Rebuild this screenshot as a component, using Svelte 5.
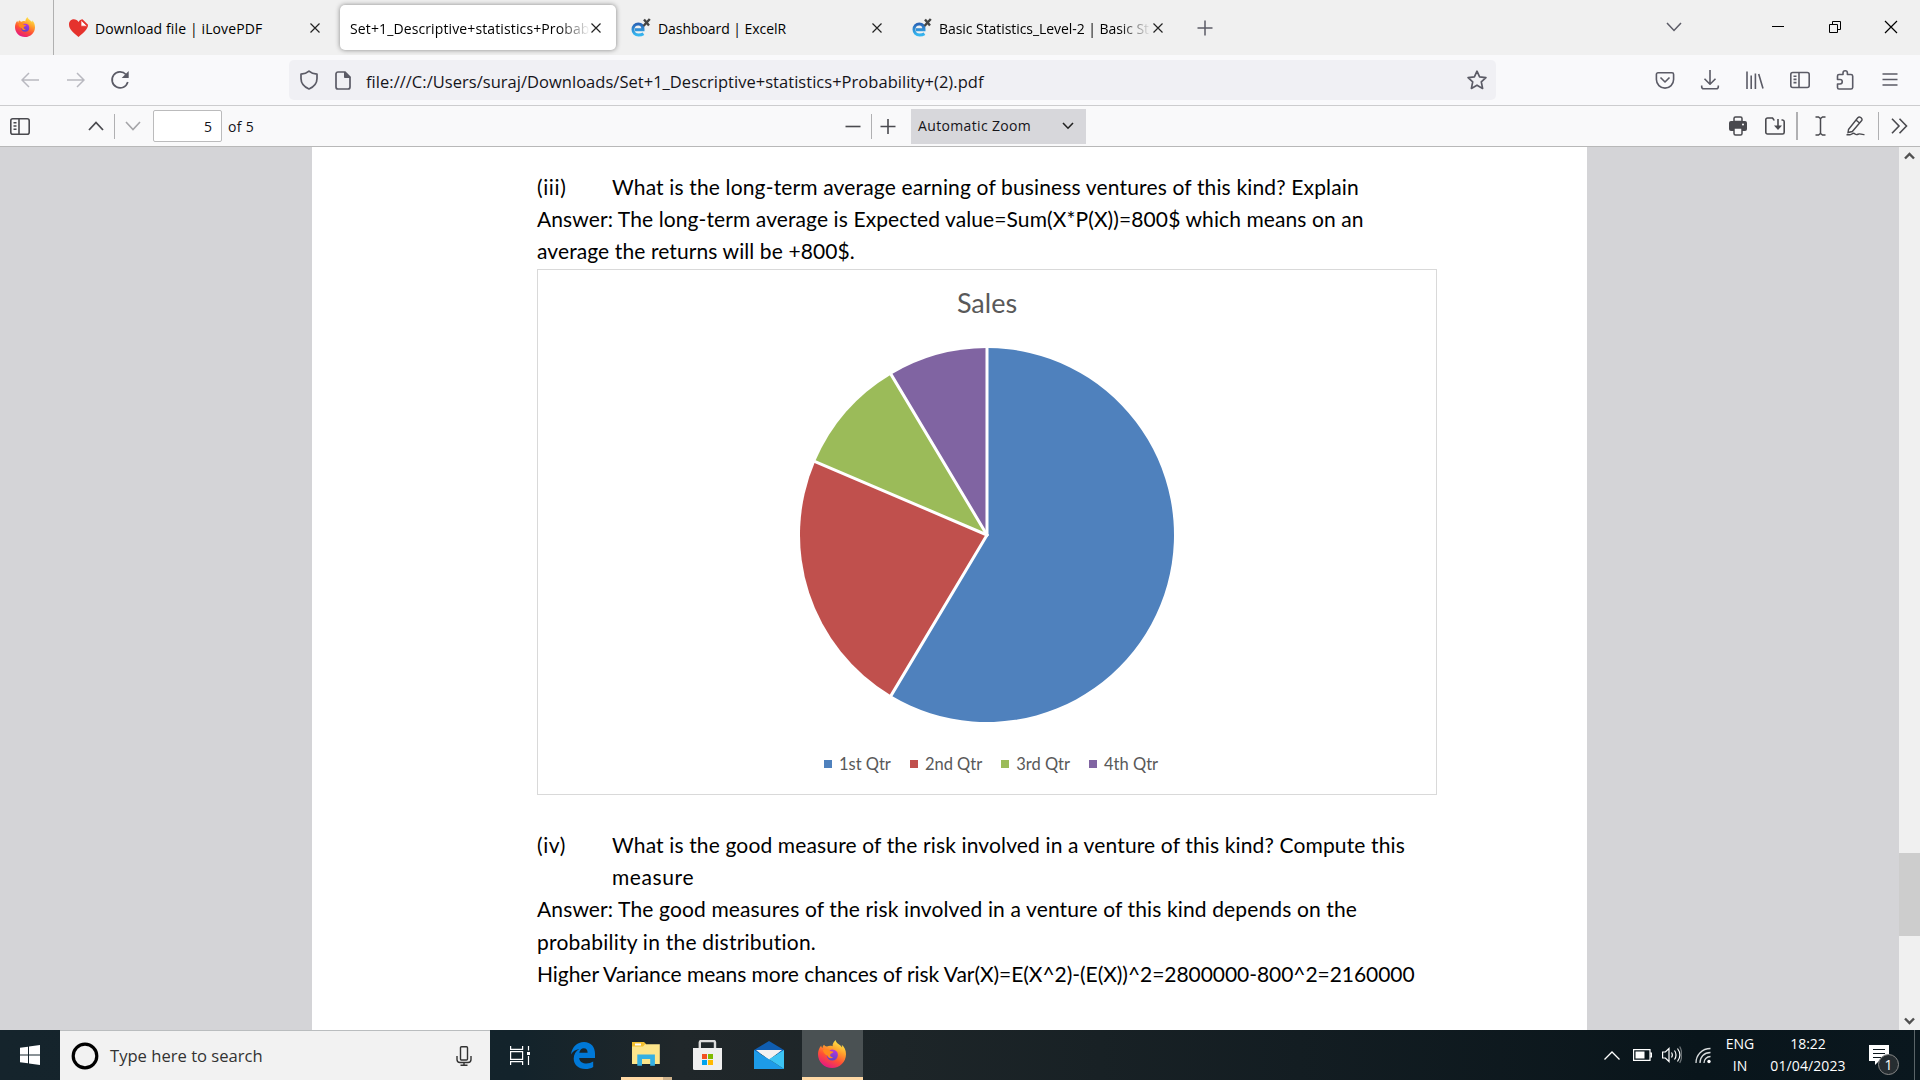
<script>
  const R = 187;
  const quarters = [
    { name: '1st Qtr', value: 8.2, color: '#4f81bd' },
    { name: '2nd Qtr', value: 3.2, color: '#c0504d' },
    { name: '3rd Qtr', value: 1.4, color: '#9bbb59' },
    { name: '4th Qtr', value: 1.2, color: '#8064a2' }
  ];
  const total = quarters.reduce((s, q) => s + q.value, 0);
  let acc = 0;
  const slices = quarters.map((q) => {
    const a0 = (acc / total) * 2 * Math.PI;
    acc += q.value;
    const a1 = (acc / total) * 2 * Math.PI;
    const large = a1 - a0 > Math.PI ? 1 : 0;
    const p = (a) => `${(R * Math.sin(a)).toFixed(2)} ${(-R * Math.cos(a)).toFixed(2)}`;
    return { color: q.color, d: `M0 0L${p(a0)}A${R} ${R} 0 ${large} 1 ${p(a1)}Z`, ray: p(a0).split(' ') };
  });
</script>

{#snippet firefox(size)}
  <svg width={size} height={size} viewBox="0 0 28 28">
    <defs>
      <linearGradient id="ffx" x1="0.8" y1="0" x2="0.3" y2="1">
        <stop offset="0" stop-color="#fff44f" /><stop offset=".35" stop-color="#ffa22c" />
        <stop offset=".65" stop-color="#ff5034" /><stop offset="1" stop-color="#e31587" />
      </linearGradient>
      <linearGradient id="ffp" x1="0.6" y1="0" x2="0.4" y2="1">
        <stop offset="0" stop-color="#b833e1" /><stop offset="1" stop-color="#5a45c9" />
      </linearGradient>
    </defs>
    <path fill="url(#ffx)" d="M17.600 0c-2 2-3.200 4-3 6.200-2-.8-4-.5-5.600.4C7.400 6.300 6.500 5.500 6 4.700 5 5.500 4.500 6.500 4.600 7.900 3.700 7.300 3.300 6.400 3.200 5.400 1 8.200 0 11 0 14.300 0 22 6.300 28 14 28s14-6 14-13.800c0-4-1.600-7.500-4.300-9.500.4 1 .5 2 .4 2.800C22.500 4.500 18 3.600 17.600 0Z" />
    <circle cx="14.300" cy="15" r="5.600" fill="url(#ffp)" />
    <path fill="#ff8a1e" d="M5 10c3-2 6-1 7.500 1l3 .7c-.4 1.500-2.800 1.600-3.300 2.800-.4 1.500 1 3 3 2.700-1.700 2-5.200 1.200-5.700-1.400C7 14.500 5 12.500 5 10Z" />
  </svg>
{/snippet}

{#snippet closeX()}
  <svg class="x" width="12" height="12" viewBox="0 0 12 12"><path d="M1.500 1.500l9 9M10.500 1.500l-9 9" /></svg>
{/snippet}

{#snippet excelr()}
  <svg width="20" height="20" viewBox="0 0 20 20">
    <defs><linearGradient id="ex" x1="0" y1="0" x2="0" y2="1"><stop offset="0" stop-color="#2a66b8" /><stop offset="1" stop-color="#35b6f0" /></linearGradient></defs>
    <path d="M4 11.800h8C12 8 10 6 7.300 6 4.200 6 2 8.300 2 11.500S4.200 17 7.600 17c2 0 3.500-.4 4.900-1.300" fill="none" stroke="url(#ex)" stroke-width="3" />
    <path d="M13 1.500l5 6M18.800 1l-6.300 7" stroke="#444" stroke-width="2.400" />
  </svg>
{/snippet}

<div class="screen">
  <header class="tabs">
    <div class="pin">{@render firefox(20)}</div>
    <div class="tab t1">
      <svg width="19" height="18" viewBox="0 0 19 18"><path fill="#e5322d" d="M9.500 18C4 13.500 0 10 0 5.500 0 2.500 2 .3 4.800.3c2 0 3.700 1 4.700 2.700C10.500 1.300 12 .3 13.500.3L19 5.800c0 4.200-4 7.700-9.500 12.200Z" /><path fill="#fff" stroke="#e5322d" stroke-width=".7" d="M12 1.200v6h6.300Z" /></svg>
      <span class="name n1">Download file | iLovePDF</span>{@render closeX()}
    </div>
    <div class="tab t2 active">
      <span class="name n2">Set+1_Descriptive+statistics+Probab</span>{@render closeX()}
    </div>
    <div class="tab t3">{@render excelr()}<span class="name n3">Dashboard | ExcelR</span>{@render closeX()}</div>
    <div class="tab t4">{@render excelr()}<span class="name n4">Basic Statistics_Level-2 | Basic St</span>{@render closeX()}</div>
    <svg class="plus" width="16" height="16" viewBox="0 0 16 16"><path d="M8 .5v15M.5 8h15" /></svg>
    <div class="win">
      <svg width="16" height="10" viewBox="0 0 16 10" stroke="#5b5b66" stroke-width="1.500"><path d="M1 1l7 7.500L15 1" /></svg>
      <svg width="12" height="12" viewBox="0 0 12 12" stroke="#000"><path d="M0 5.500h12" /></svg>
      <svg width="12" height="12" viewBox="0 0 12 12" stroke="#000"><path d="M.5 3.500h8v8h-8zM3.500 3.500v-3h8v8h-3" /></svg>
      <svg width="14" height="14" viewBox="0 0 14 14" stroke="#000" stroke-width="1.200"><path d="M1 1l12 12M13 1L1 13" /></svg>
    </div>
  </header>

  <nav class="nav">
    <div class="navbtns">
      <svg width="18" height="16" viewBox="0 0 18 16" stroke="#b9b9c0" stroke-width="1.500"><path d="M18 8H1.500M8 1L1 8l7 7" /></svg>
      <svg width="18" height="16" viewBox="0 0 18 16" stroke="#b9b9c0" stroke-width="1.500"><path d="M0 8h16.500M10 1l7 7-7 7" /></svg>
      <svg width="20" height="20" viewBox="0 0 20 20" stroke="#5b5b66" stroke-width="1.700"><path d="M17.800 12A8 8 0 1 1 16 4.500" /><path fill="#5b5b66" stroke="none" d="M18.700 1v7h-7Z" /></svg>
    </div>
    <div class="url">
      <svg width="20" height="20" viewBox="0 0 20 20" stroke="#5b5b66" stroke-width="1.700"><path d="M10 1.200C12 3 15 4 18 4.200v4.300c0 4.500-3 8.300-8 10.500C5 16.800 2 13 2 8.500V4.200C5 4 8 3 10 1.200Z" stroke-linejoin="round" /></svg>
      <svg width="16" height="19" viewBox="0 0 16 19" stroke="#5b5b66" stroke-width="1.700"><path d="M3 1h7l5 5v10a2 2 0 0 1-2 2H3a2 2 0 0 1-2-2V3a2 2 0 0 1 2-2Z" /><path fill="#5b5b66" d="M9.500 1v5.500H15Z" stroke-width="1" /></svg>
      <span class="address">file:///C:/Users/suraj/Downloads/Set+1_Descriptive+statistics+Probability+(2).pdf</span>
      <svg class="star" width="20" height="20" viewBox="0 0 20 20" stroke="#5b5b66" stroke-width="1.700" stroke-linejoin="round"><path d="M10 1.200l2.600 5.600 6.300.8-4.600 4.200 1.300 6.600L10 15.200l-5.600 3.200 1.300-6.600L1.100 7.600l6.300-.8Z" /></svg>
    </div>
    <div class="tools">
      <svg viewBox="0 0 20 20"><path d="M3 2.800h14a1.600 1.600 0 0 1 1.600 1.600V9.500a8.600 8.600 0 0 1-17.200 0V4.400A1.600 1.600 0 0 1 3 2.800ZM5.500 7.500L10 12l4.500-4.500" /></svg>
      <svg viewBox="0 0 20 20"><path d="M10 0v14M4.500 8.700L10 14.200l5.500-5.500M1.700 15.500v1.300a2 2 0 0 0 2 2h12.600a2 2 0 0 0 2-2v-1.300" /></svg>
      <svg viewBox="0 0 20 20"><path d="M2 1.500V19M6.200 5.500V19M10.400 3.500V19M13.700 4l4.300 14.500" /></svg>
      <svg viewBox="0 0 20 20"><rect x=".8" y="2.500" width="18.400" height="15" rx="2" /><path d="M9 2.500v15M3.500 6.200H6.500M3.500 9.400H6.500M3.500 12.600H6.500" /></svg>
      <svg viewBox="0 0 20 20"><path d="M2.500 7.500V6a1.500 1.500 0 0 1 1.500-1.500h4V3a2.200 2.200 0 0 1 4.400 0v1.500H16A1.700 1.700 0 0 1 17.700 6v11.500A1.700 1.700 0 0 1 16 19H4a1.500 1.500 0 0 1-1.500-1.500V14H5a2.200 2.200 0 0 0 0-4.500H2.500Z" /></svg>
      <svg viewBox="0 0 20 20"><path d="M2.500 4h15M2.500 9.500h15M2.500 15h15" /></svg>
    </div>
  </nav>

  <div class="pdfbar">
    <div class="left">
      <svg width="20" height="17" viewBox="0 0 20 17" stroke="#4a4a4f" stroke-width="1.600"><rect x=".8" y=".8" width="18.400" height="15.400" rx="2" /><path d="M9 1v15M3.500 4.800h3M3.500 8h3M3.500 11.200h3" /></svg>
      <svg class="up" width="16" height="10" viewBox="0 0 16 10" stroke="#4a4a4f" stroke-width="1.800"><path d="M1 9l7-7.500L15 9" /></svg>
      <i class="bar"></i>
      <svg class="down" width="16" height="10" viewBox="0 0 16 10" stroke="#a5a5a8" stroke-width="1.600"><path d="M1 1l7 7.500L15 1" /></svg>
      <div class="page-no">5</div>
      <span class="of">of 5</span>
    </div>
    <div class="zoom">
      <svg width="16" height="16" viewBox="0 0 16 16" stroke="#4a4a4f" stroke-width="1.600"><path d="M.5 8.500h15" /></svg>
      <i class="bar"></i>
      <svg width="16" height="16" viewBox="0 0 16 16" stroke="#4a4a4f" stroke-width="1.600"><path d="M.5 8.500h15M8 1v15" /></svg>
      <div class="select"><span>Automatic Zoom</span><svg width="12" height="8" viewBox="0 0 12 8" stroke="#222" stroke-width="1.600"><path d="M1 1l5 5.200L11 1" /></svg></div>
    </div>
    <div class="right">
      <svg width="18" height="20" viewBox="0 0 18 20"><path fill="#4a4a4f" d="M2 5h14a2 2 0 0 1 2 2v6a2 2 0 0 1-2 2H2a2 2 0 0 1-2-2V7a2 2 0 0 1 2-2Z" /><path fill="#f9f9fa" stroke="#4a4a4f" stroke-width="1.500" d="M5 5.500V2.500A1.500 1.500 0 0 1 6.500 1h5A1.500 1.500 0 0 1 13 2.500v3ZM5 12h8v5.500A1.500 1.500 0 0 1 11.500 19h-5A1.500 1.500 0 0 1 5 17.500Z" /><circle cx="14" cy="8.500" r="1" fill="#fff" /></svg>
      <svg class="save" width="20" height="18" viewBox="0 0 20 18" stroke="#4a4a4f" stroke-width="1.600"><path d="M9.500 3H9L7.500 1H2.500A1.700 1.700 0 0 0 .8 2.700v12.600A1.700 1.700 0 0 0 2.500 17h15a1.700 1.700 0 0 0 1.700-1.700V4.700A1.700 1.700 0 0 0 17.500 3H16.500M13 2v9" /><path fill="#4a4a4f" stroke="none" d="M9 8.500h8L13 13Z" /></svg>
      <i class="bar b1"></i>
      <svg class="ibeam" width="11" height="20" viewBox="0 0 11 20" stroke="#4a4a4f" stroke-width="1.500"><path d="M.5 1H3.500L5.500 2.500 7.500 1h3M5.500 2.500v15M.5 19H3.500L5.500 17.500 7.500 19h3" /></svg>
      <svg class="pen" width="19" height="20" viewBox="0 0 19 20" stroke="#4a4a4f" stroke-width="1.400"><path d="M2.500 13.500L11.800 1.800c.8-.9 2-1 2.900-.3l.5.4c.9.8 1 2 .3 2.900L6.300 15.500 2 16.500ZM10 4l3.800 3.200M.5 18.800h3c2 0 2.500-1.500 4-1.500s1.500 1.300 3 1.300 1.500-.7 3-.7 2 .9 5 .7" /></svg>
      <i class="bar b2"></i>
      <svg class="more" width="17" height="16" viewBox="0 0 17 16" stroke="#4a4a4f" stroke-width="1.600"><path d="M1 .8L8 8l-7 7.200M8.500 .8l7 7.200-7 7.200" /></svg>
    </div>
  </div>

  <main class="viewer">
    <article class="page">
      <p class="item"><span class="num">(iii)</span><span class="l1">What is the long-term average earning of business ventures of this kind? Explain</span></p>
      <p><span class="l2">Answer: The long-term average is Expected value=Sum(X*P(X))=800$ which means on an</span></p>
      <p><span class="l3">average the returns will be +800$.</span></p>
      <figure class="chart">
        <figcaption>Sales</figcaption>
        <svg class="pie" width="380" height="380" viewBox="-190 -190 380 380">
          {#each slices as s}<path d={s.d} fill={s.color} />{/each}
          {#each slices as s}<line x1="0" y1="0" x2={s.ray[0] * 1.01} y2={s.ray[1] * 1.01} stroke="#fff" stroke-width="3" stroke-linecap="round" />{/each}
        </svg>
        <ul class="legend">
          {#each quarters as q}<li><i style="background:{q.color}"></i><span>{q.name}</span></li>{/each}
        </ul>
      </figure>
      <p class="item"><span class="num">(iv)</span><span class="l4">What is the good measure of the risk involved in a venture of this kind? Compute this</span></p>
      <p class="item"><span class="num"></span><span class="l5">measure</span></p>
      <p><span class="l6">Answer: The good measures of the risk involved in a venture of this kind depends on the</span></p>
      <p><span class="l7">probability in the distribution.</span></p>
      <p><span class="l8">Higher Variance means more chances of risk Var(X)=E(X^2)-(E(X))^2=2800000-800^2=2160000</span></p>
    </article>
    <aside class="scroll">
      <svg width="11" height="8" viewBox="0 0 11 8" stroke="#505050" stroke-width="2.400"><path d="M1 6.500l4.500-4.500L10 6.500" /></svg>
      <div class="thumb"></div>
      <svg width="11" height="8" viewBox="0 0 11 8" stroke="#505050" stroke-width="2.400"><path d="M1 1.500L5.500 6 10 1.500" /></svg>
    </aside>
  </main>

  <footer class="taskbar">
    <div class="start"><svg width="20" height="20" viewBox="0 0 20 20"><path fill="#fff" d="M0 2.800L8 1.700v7.800H0zM9 1.500L20 0v9.500H9zM0 10.500h8v7.800L0 17.200zM9 10.500h11V20L9 18.500z" /></svg></div>
    <div class="search">
      <svg width="28" height="28" viewBox="0 0 28 28"><circle cx="14" cy="14" r="11.800" stroke="#000" stroke-width="3.200" /></svg>
      <span>Type here to search</span>
      <svg class="mic" width="16" height="20" viewBox="0 0 16 20" stroke="#333" stroke-width="1.400"><rect x="4.500" y=".7" width="7" height="13.300" rx="1" /><path d="M1 10v3.500A3 3 0 0 0 4 16.500h8a3 3 0 0 0 3-3V10M8 16.500V19M4.500 19.200h7" /></svg>
    </div>
    <div class="app view"><svg width="20" height="19" viewBox="0 0 20 19" stroke="#fff" stroke-width="1.200"><path d="M.6 0v3.400h12V0M.6 19v-3.400h12V19M.6 5.600h12v7.800H.6ZM18.500 0v4.500M18.500 10v9" /><rect x="17" y="6" width="3" height="3" fill="#fff" stroke="none" /></svg></div>
    <div class="app"><svg width="24" height="27" viewBox="0 0 24 27"><path fill="#0078d7" d="M0 12.500C1 5 6 0 13 0c7 0 11 5 11 11.500V16H8.200c.3 4 3.600 5.500 7.300 5.500 2.500 0 4.700-.7 6.700-1.900v5.300C20 26.200 17.300 27 14.300 27 7.300 27 2.700 22.800 2.700 16.500c0-4 2-7.300 5.700-9.500C4.500 7.500 1.500 9.500 0 12.500ZM8.300 10.800h8.300C16.600 8 15.400 6.300 12.800 6.300c-2.400 0-4.100 1.800-4.500 4.500Z" /></svg></div>
    <div class="app files"><svg width="28" height="24" viewBox="0 0 28 24"><path fill="#f5c02f" d="M0 0h12l2 2v3H0Z" /><path fill="#fff" d="M3 1.500h6v2H3z" /><path fill="#fde58b" d="M0 4.500h11l2-2.300h14.800V22H0Z" /><path fill="#35b0e3" d="M5.300 12.500h17.600V23.800h-4.700V17H10v6.800H5.300Z" /></svg></div>
    <div class="app"><svg width="29" height="30" viewBox="0 0 29 30"><path d="M6.800 9V2.300A1.500 1.500 0 0 1 8.300 1h12.200A1.500 1.500 0 0 1 22 2.300V9" fill="none" stroke="#dcdcdc" stroke-width="2.400" /><path fill="#efefef" d="M0 8h29v20.500A1.500 1.500 0 0 1 27.500 30h-26A1.500 1.500 0 0 1 0 28.500Z" /><path fill="#f25022" d="M9 14h5v5H9z" /><path fill="#7fba00" d="M15 14h5v5h-5z" /><path fill="#00a4ef" d="M9 20h5v5H9z" /><path fill="#ffb900" d="M15 20h5v5h-5z" /></svg></div>
    <div class="app"><svg width="30" height="28" viewBox="0 0 30 28"><path fill="#0f5db0" d="M15 0L30 9v4H0V9Z" /><path fill="#f2f2f2" d="M2 9h26L15 19Z" /><path fill="#1d9be8" d="M0 9l15 9.300L30 28H0Z" /><path fill="#3cc4f4" d="M30 9v19L15 18.300Z" /></svg></div>
    <div class="app on">{@render firefox(28)}</div>
    <div class="tray">
      <svg width="16" height="9" viewBox="0 0 16 9" stroke="#fff" stroke-width="1.300"><path d="M.5 8.500L8 1l7.500 7.500" /></svg>
      <svg class="batt" width="19" height="12" viewBox="0 0 19 12" stroke="#fff" stroke-width="1.200"><path d="M.6.600h16.400v10.800H.6ZM17 4h1.400v4H17" /><path d="M2.500 2.500h9v7h-9z" fill="#fff" stroke="none" /></svg>
      <svg class="vol" width="20" height="18" viewBox="0 0 20 18" stroke="#fff" stroke-width="1.200"><path d="M.6 6h2.800L7 2.500v13L3.400 12H.6ZM9.500 6.500c1 1.500 1 3.500 0 5M12.500 4.500c2 2.500 2 6.500 0 9M15.500 2.500c3 4 3 9 0 13" /><path d="M17.700.5c3 5 2.500 12 0 16.500" opacity=".4" /></svg>
      <svg class="wifi" width="16" height="17" viewBox="0 0 16 17" stroke="#d8dcdd" stroke-width="1.300"><path d="M1 16C1 8 7 1.500 15.500 1.500M5 16C5 10 9 5.500 15.500 5.500M9 16C9 12.500 11.500 9.500 15.500 9.500" /><circle cx="14" cy="14.500" r="1.700" fill="#fff" stroke="none" /></svg>
      <div class="lang"><span>ENG</span><span>IN</span></div>
      <div class="clock"><span class="time">18:22</span><span class="date">01/04/2023</span></div>
      <div class="note">
        <svg width="20" height="20" viewBox="0 0 20 20"><path fill="#fff" d="M0 0h20v16H10l-4 4v-4H0Z" /><path stroke="#0b161c" stroke-width="1.200" d="M4 4.500h12M4 8.500h12M4 12.500h8" /></svg>
        <b>1</b>
      </div>
      <i class="peek"></i>
    </div>
  </footer>
</div>

<style>
  :global(body) { margin: 0; overflow: hidden; }
  .screen { width: 1920px; height: 1080px; display: flex; flex-direction: column; overflow: hidden; font-family: 'Open Sans', 'Noto Sans', sans-serif; font-size: 14px; color: #15141a; }
  .screen * { box-sizing: border-box; }
  svg { flex: none; display: block; fill: none; }
  span { white-space: nowrap; }
  p, figure, ul { margin: 0; padding: 0; }

  .tabs { height: 55px; flex: none; background: #f0f0f0; display: flex; align-items: center; color: #000; }
  .pin { width: 54px; height: 55px; border-right: 1px solid #b0b0b0; padding: 17px 0 0 15px; flex: none; }
  .tab { height: 45px; display: flex; align-items: center; flex: none; }
  .tab .name { line-height: 24px; padding-top: 2px; }
  .x { stroke: #222; stroke-width: 1.200; margin-left: auto; }
  .t1 { width: 252px; margin-left: 15px; }
  .t1 .name { margin-left: 7px; letter-spacing: .12px; }
  .t2 { width: 276px; margin-left: 19px; padding: 0 14px 0 10px; background: #fff; border-radius: 5px; box-shadow: 0 0 5px rgba(0,0,0,.45); }
  .t2 .name { width: 240px; letter-spacing: .12px; mask-image: linear-gradient(90deg, #000 208px, transparent 240px); }
  .t3 { width: 252px; margin-left: 15px; }
  .t3 .name, .t4 .name { margin-left: 7px; letter-spacing: -.06px; }
  .t4 { width: 252px; margin-left: 29px; }
  .t4 .name { width: 212px; mask-image: linear-gradient(90deg, #000 180px, transparent 212px); }
  .plus { margin-left: 33px; stroke: #5b5b66; stroke-width: 1.500; }
  .win { margin-left: auto; display: flex; align-items: center; padding: 0 22px 2px 0; }
  .win svg:nth-child(2) { margin-left: 90px; }
  .win svg:nth-child(3) { margin-left: 45px; }
  .win svg:nth-child(4) { margin-left: 43px; }

  .nav { height: 51px; flex: none; background: #f9f9fb; border-bottom: 1px solid #ccccce; display: flex; align-items: center; }
  .navbtns { display: flex; align-items: center; width: 289px; padding-left: 21px; }
  .navbtns svg:nth-child(2) { margin-left: 28px; }
  .navbtns svg:nth-child(3) { margin-left: 25px; }
  .url { width: 1207px; height: 40px; background: #f0f0f4; border-radius: 5px; display: flex; align-items: center; padding: 0 9px 0 10px; }
  .url svg:nth-child(2) { margin-left: 16px; }
  .address { font-size: 16.500px; margin-left: 15px; padding-top: 3px; letter-spacing: .03px; }
  .star { margin-left: auto; }
  .tools { display: flex; gap: 25px; margin-left: 159px; }
  .tools svg { width: 20px; height: 20px; stroke: #5b5b66; stroke-width: 1.600; stroke-linejoin: round; }

  .pdfbar { height: 41px; flex: none; background: #f9f9fa; border-bottom: 1px solid #b8b8b8; display: flex; align-items: center; }
  .bar { width: 1px; height: 25px; background: #b0b0b2; flex: none; }
  .left { display: flex; align-items: center; width: 845px; padding-left: 10px; }
  .up { margin-left: 58px; }
  .left .bar { margin-left: 10px; }
  .down { margin-left: 10px; }
  .page-no { width: 69px; height: 32px; margin-left: 12px; background: #fff; border: 1px solid #bbbbbc; border-radius: 2px; text-align: right; padding: 0 9px 0 0; line-height: 32px; }
  .of { margin-left: 6px; padding-top: 1px; letter-spacing: .3px; }
  .zoom { display: flex; align-items: center; }
  .zoom .bar { margin: 0 8px 0 10px; }
  .select { width: 175px; height: 35px; margin-left: 15px; background: #d7d7db; display: flex; align-items: center; justify-content: space-between; padding: 0 12px 0 7px; }
  .select span { letter-spacing: .35px; padding-bottom: 2px; }
  .right { margin-left: auto; display: flex; align-items: center; padding-right: 12px; }
  .save { margin-left: 18px; }
  .b1 { width: 2px; height: 28px; margin-left: 11px; }
  .ibeam { margin-left: 17px; }
  .pen { margin-left: 20px; }
  .b2 { height: 28px; margin-left: 13px; }
  .more { margin-left: 12px; }

  .viewer { height: 883px; flex: none; background: #d4d4d7; display: flex; }
  .page { width: 1275px; height: 883px; margin-left: 312px; background: #fff; padding: 24px 0 0 225px; font-family: Lato, sans-serif; font-size: 21px; color: #000; }
  .page p { height: 32.200px; line-height: 32.200px; display: flex; }
  .num { width: 75px; flex: none; letter-spacing: .6px; }
  .l1 { letter-spacing: .15px; }
  .l2 { letter-spacing: .1px; }
  .l3 { letter-spacing: .1px; }
  .l4 { letter-spacing: .14px; }
  .l5 { letter-spacing: .6px; }
  .l6 { letter-spacing: .13px; }
  .l7 { letter-spacing: .23px; }
  .l8 { letter-spacing: -.05px; }
  .chart { width: 900px; height: 526px; border: 1px solid #d9d9d9; margin: 1px 0 34.500px; display: flex; flex-direction: column; align-items: center; color: #595959; }
  figcaption { font-size: 27px; line-height: 36px; margin-top: 15px; }
  .pie { margin-top: 24px; }
  .legend { list-style: none; display: flex; font-size: 16.500px; line-height: 24px; gap: 19px; margin: 27px 0 0 8px; }
  .legend li { display: flex; align-items: center; }
  .legend i { width: 8px; height: 8px; margin-right: 7px; }
  .scroll { width: 21px; margin-left: auto; background: #f0f0f0; display: flex; flex-direction: column; align-items: center; padding: 5px 0; }
  .thumb { width: 21px; height: 83px; background: #cdcdcd; margin: 693px 0 auto; }

  .taskbar { height: 50px; flex: none; display: flex; background: linear-gradient(90deg, #15242c 0, #13232b 520px, #20272a 680px, #1d2528 900px, #131d22 1300px, #09151b 1700px, #0a171e 100%); color: #fff; }
  .start { width: 60px; padding: 15px 20px; }
  .search { width: 430px; background: #f2f2f2; border-top: 1px solid #babdbf; display: flex; align-items: center; padding: 0 18px 0 11px; color: #333; font-size: 16.600px; }
  .search span { margin-left: 11px; }
  .mic { margin-left: auto; }
  .app { width: 62px; height: 50px; display: flex; align-items: center; justify-content: center; }
  .app.view { padding-right: 2px; }
  .app.files { width: 51px; margin: 0 4px 0 7px; padding-right: 1px; border-style: solid; border-image: linear-gradient(90deg, #ffd9a5 40px, #cdb18b 40px) 3; border-width: 0 0 3px; }
  .app.on { background: #4a5153; border-bottom: 3px solid #ffd9a5; width: 61px; margin-left: 2px; padding-right: 1px; }
  .tray { margin-left: auto; display: flex; align-items: center; font-size: 14px; }
  .batt { margin-left: 13px; }
  .vol { margin-left: 10px; }
  .wifi { margin-left: 13px; }
  .lang, .clock { display: flex; flex-direction: column; align-items: center; line-height: 22px; }
  .lang { width: 30px; margin-left: 14px; }
  .clock { width: 78px; margin-left: 14px; }
  .date { letter-spacing: .1px; }
  .note { position: relative; margin-left: 22px; width: 45px; height: 20px; }
  .note b { position: absolute; left: 9px; top: 9px; width: 21px; height: 21px; border: 1px solid #888; border-radius: 50%; background: #262d31; font-weight: 400; font-size: 14px; line-height: 19px; text-align: center; }
  .peek { width: 1px; height: 50px; background: #5a6468; margin-right: 5px; }
</style>
